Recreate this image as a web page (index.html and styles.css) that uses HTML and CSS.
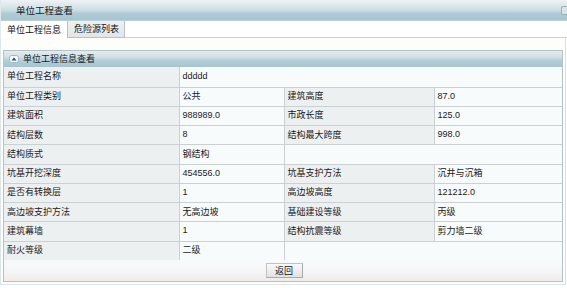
FILE: index.html
```html
<!DOCTYPE html>
<html lang="zh-CN">
<head>
<meta charset="utf-8">
<title>单位工程查看</title>
<link rel="stylesheet" href="styles.css">
</head>
<body>
<div class="win">
  <div class="win-header">
    <span class="win-title">单位工程查看</span>
    <span class="win-tool"></span>
  </div>
  <div class="tabs">
    <div class="tab active">单位工程信息</div>
    <div class="tab">危险源列表</div>
    <div class="tab-fill"></div>
  </div>
  <div class="tab-body">
    <div class="panel">
      <div class="panel-header">
        <span class="collapse-icon">
          <svg width="10" height="8" viewBox="0 0 10 8"><rect x="0.5" y="0.5" width="9" height="7" rx="2" fill="#f4f8fa" stroke="#9fb8c2"/><path d="M2.5 5.5 L5 2.5 L7.5 5.5 Z" fill="#24506a"/></svg>
        </span>
        <span class="panel-title">单位工程信息查看</span>
      </div>
      <table class="info">
        <colgroup>
          <col class="c1"><col class="c2"><col class="c3"><col class="c4">
        </colgroup>
        <tr class="first"><td class="lbl">单位工程名称</td><td colspan="3">ddddd</td></tr>
        <tr><td class="lbl">单位工程类别</td><td>公共</td><td class="lbl">建筑高度</td><td>87.0</td></tr>
        <tr><td class="lbl">建筑面积</td><td>988989.0</td><td class="lbl">市政长度</td><td>125.0</td></tr>
        <tr><td class="lbl">结构层数</td><td>8</td><td class="lbl">结构最大跨度</td><td>998.0</td></tr>
        <tr><td class="lbl">结构质式</td><td>钢结构</td><td colspan="2"></td></tr>
        <tr><td class="lbl">坑基开挖深度</td><td>454556.0</td><td class="lbl">坑基支护方法</td><td>沉井与沉箱</td></tr>
        <tr><td class="lbl">是否有转换层</td><td>1</td><td class="lbl">高边坡高度</td><td>121212.0</td></tr>
        <tr><td class="lbl">高边坡支护方法</td><td>无高边坡</td><td class="lbl">基础建设等级</td><td>丙级</td></tr>
        <tr><td class="lbl">建筑幕墙</td><td>1</td><td class="lbl">结构抗震等级</td><td>剪力墙二级</td></tr>
        <tr><td class="lbl">耐火等级</td><td>二级</td></tr>
      </table>
      <div class="actions">
        <button class="btn" type="button">返回</button>
      </div>
    </div>
  </div>
</div>
</body>
</html>
```
FILE: styles.css
```css
* { box-sizing: border-box; }
html, body { margin: 0; padding: 0; background: #ffffff; }
body {
  font-family: "Liberation Sans", "Noto Sans CJK SC", sans-serif;
  font-size: 9px;
  color: #111;
}
.win { width: 567px; }
.win-header {
  height: 21px;
  display: flex;
  align-items: center;
  justify-content: space-between;
  padding-left: 15px;
  background: linear-gradient(to bottom, #eef3f4 0%, #e3ecef 15%, #cfe0e5 45%, #aecbd5 65%, #a7c6d1 95%, #c9dbe0 100%);
  border-left: 1px solid #dfe9ec;
}
.win-title { font-size: 9.5px; color: #14222a; padding-bottom: 1px; }
.win-tool {
  width: 6px; height: 9px;
  border: 1px solid #9fb1b8;
  border-right: none;
  border-radius: 2px 0 0 2px;
  background: #d8e4e8;
}
.tabs {
  height: 17px;
  display: flex;
  background: #ffffff;
}
.tab {
  height: 17px;
  display: flex;
  align-items: center;
  padding: 0 4px 1px 6px;
  border: 1px solid #b4c2c8;
  border-top: none;
  white-space: nowrap;
}
.tab.active {
  width: 68px;
  background: #ffffff;
  border-bottom: none;
  border-left-color: #e3ebee;
}
.tab + .tab {
  width: 57px;
  margin-left: 0;
  border-left: none;
  background: linear-gradient(to bottom, #eef1f2, #e1e6e8);
}
.tab-fill {
  flex: 1;
  border-bottom: 1px solid #c7d3d8;
}
.tab-body {
  width: 566px;
  padding: 12px 2px 2px 2px;
  background: #fdfdf9;
  border-left: 1px solid #dbe6ea;
  border-right: 1px solid #d2e2e8;
  border-bottom: 1px solid #dbe6ea;
}
.panel {
  border: 1px solid #b4c3c9;
  background: #f7fbfc;
}
.panel-header {
  height: 16px;
  display: flex;
  align-items: center;
  padding-left: 5px;
  gap: 4px;
  background: linear-gradient(to bottom, #e4ecef 0%, #d3e1e6 35%, #b3ced7 60%, #a4c5d0 100%);
}
.collapse-icon { display: flex; }
.panel-title { color: #14222a; padding-bottom: 1px; }
.info {
  width: 100%;
  table-layout: fixed;
  border-collapse: collapse;
  border-style: hidden;
  background: #f7fbfc;
}
.c1 { width: 175px; }
.c2 { width: 105px; }
.c3 { width: 150px; }
.c4 { width: 128px; }
.info td {
  height: 19.25px;
  padding: 0 3px 2px 3px;
  border: 1px solid #c9d1d4;
  background: #f7fbfc;
  white-space: nowrap;
  overflow: hidden;
  color: #1a1a1a;
}
.info tr.first td { height: 20px; }
.info td.lbl { background: #edf0f1; }
.actions {
  height: 21px;
  display: flex;
  justify-content: center;
  align-items: center;
  padding-left: 2px;
  background: linear-gradient(to bottom, #f7fbfc 0%, #f4f5f5 60%, #f0eaea 100%);
}
.btn {
  width: 37px;
  height: 15px;
  padding: 0 0 1px 0;
  font-family: "Liberation Sans", "Noto Sans CJK SC", sans-serif;
  font-size: 9px;
  color: #111;
  border: 1px solid #c3c3c3;
  border-right-color: #a9a9a9;
  border-bottom-color: #a9a9a9;
  background: linear-gradient(to bottom, #fafafa, #e2e2e2);
}
```
